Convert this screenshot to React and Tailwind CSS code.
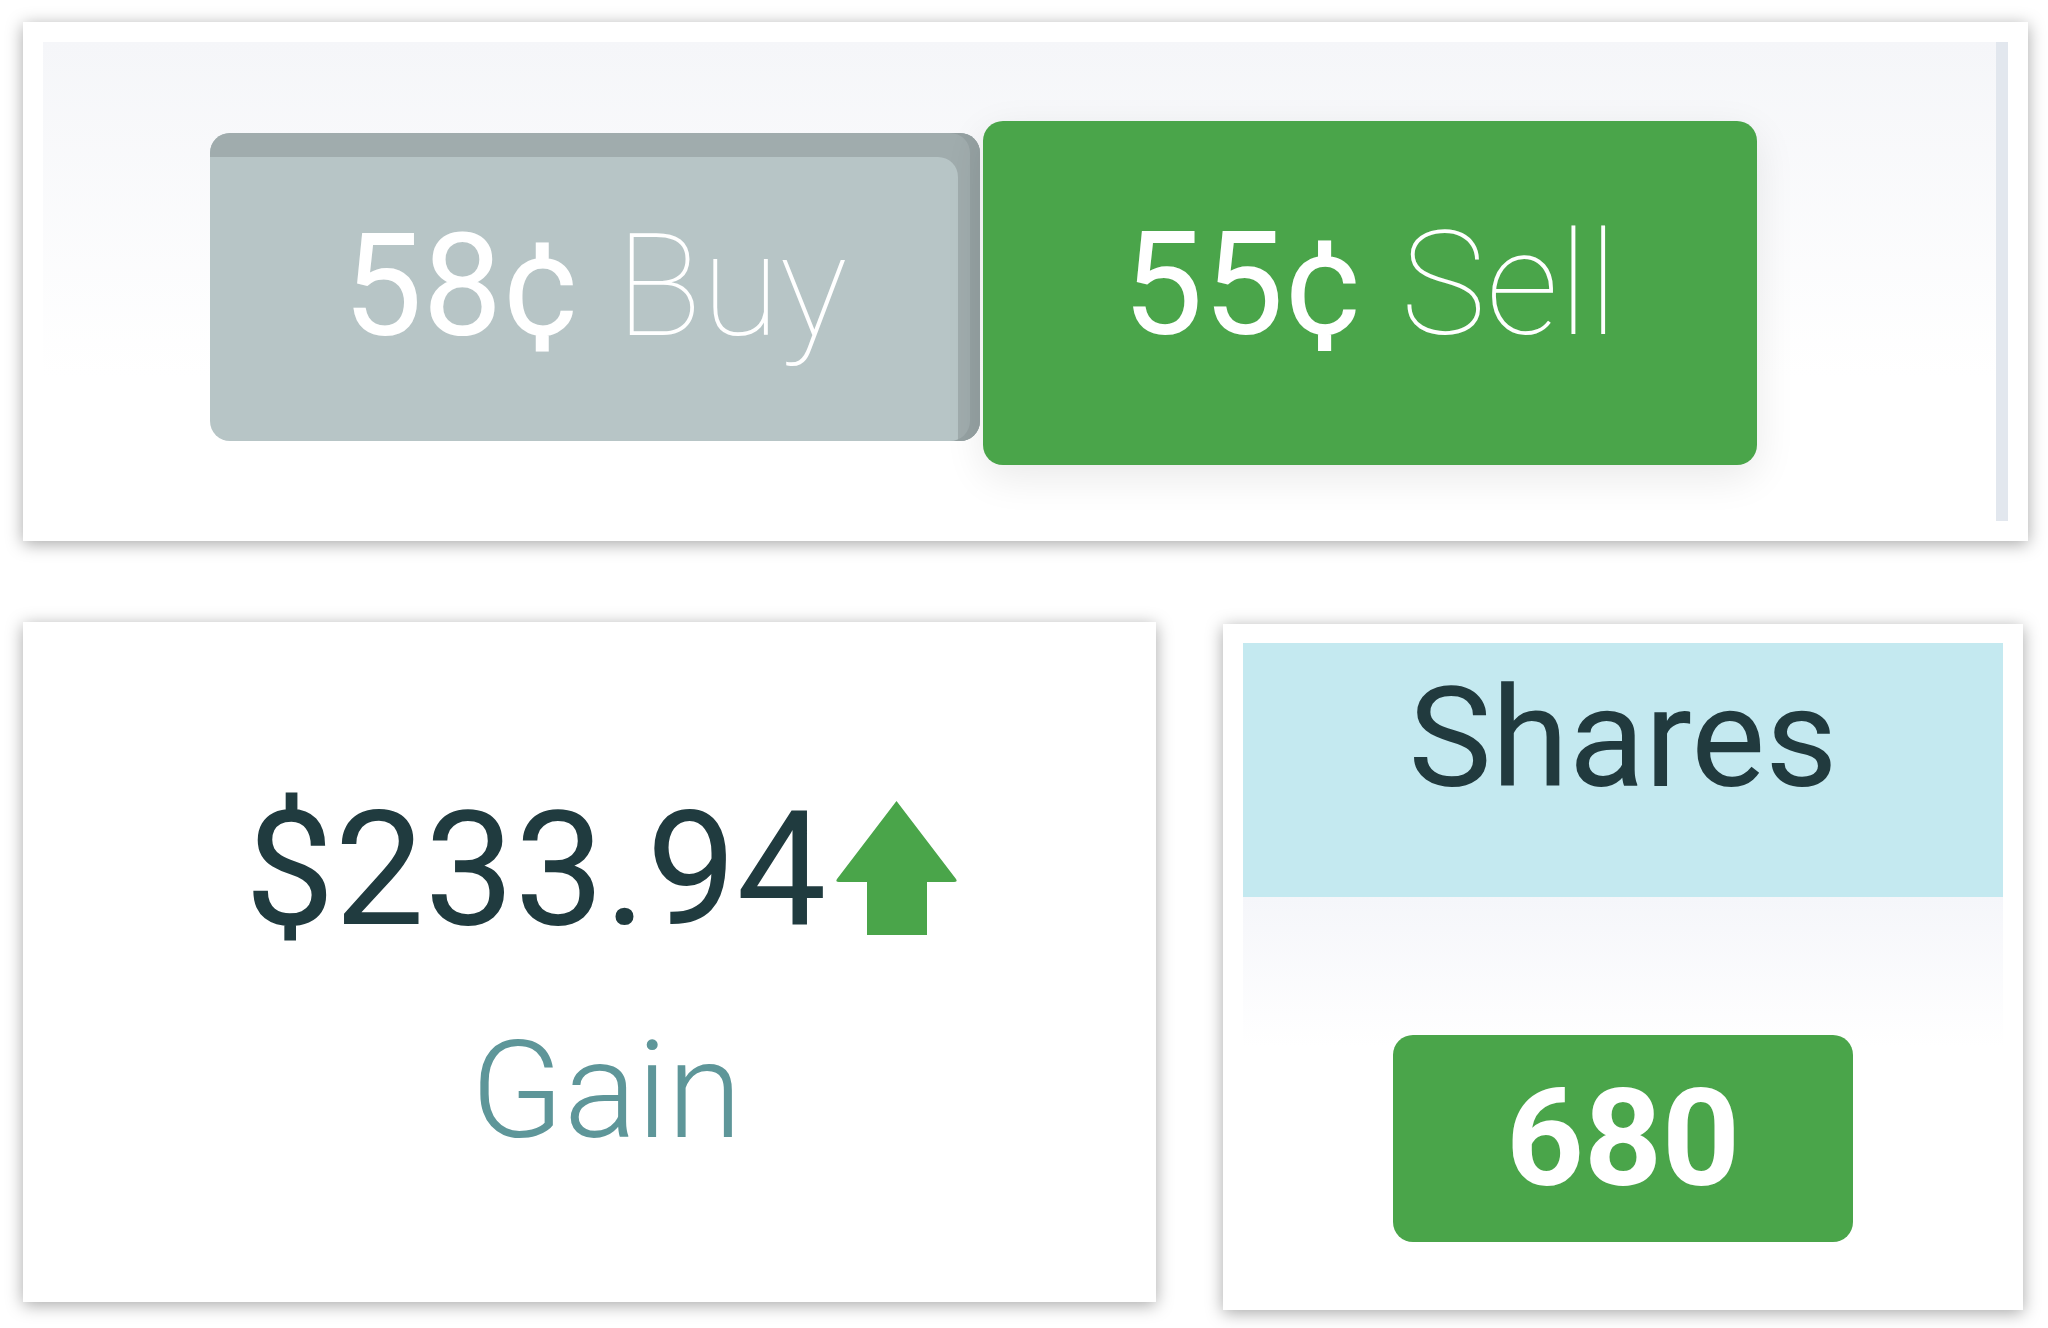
import React from 'react';

const font = { fontFamily: 'Roboto, "Open Sans", sans-serif' };

const UpArrow = () => (
  <svg width="123" height="136" viewBox="0 0 123 136" className="mt-[9px] ml-[9px] shrink-0">
    <path d="M61.5 2 L121 80 Q123 83 119 83 L92 83 L92 136 L32 136 L32 83 L4 83 Q0 83 2 80 Z" fill="#4aa54a" />
  </svg>
);

const TradeButtons = () => (
  <div className="bg-white w-[2005px] h-[519px] ml-[23px] mt-[22px] p-[20px] flex shadow-[0_3px_16px_rgba(0,0,0,0.35)]">
    <div className="flex-1 flex items-start pl-[167px] pt-[79px] bg-[linear-gradient(to_bottom,#f5f6f9,#ffffff_70%)]">
      <button className="mt-[12px] w-[770px] h-[308px] rounded-[20px] bg-[#b7c5c6] shadow-[inset_-10px_0_0_#95a1a2,inset_-22px_24px_0_#a0acad] flex items-center justify-center text-white text-[142px] leading-none">
        <span className="font-normal">58¢</span>
        <span className="font-thin ml-[36px]">Buy</span>
      </button>
      <button className="ml-[3px] w-[774px] h-[344px] rounded-[20px] bg-[#4aa54a] shadow-[0_12px_40px_rgba(0,0,0,0.09)] flex items-center justify-center pb-[16px] text-white text-[144px] leading-none">
        <span className="font-normal">55¢</span>
        <span className="font-thin ml-[38px]">Sell</span>
      </button>
    </div>
    <div className="w-[12px] bg-[#e2e7ee]" />
  </div>
);

const GainCard = () => (
  <div className="bg-white w-[1133px] h-[680px] shadow-[0_3px_16px_rgba(0,0,0,0.35)] flex flex-col items-center pt-[168px] pl-[24px]">
    <div className="flex items-start">
      <span className="text-[160px] leading-none text-[#203b3f] font-normal">$233.94</span>
      <UpArrow />
    </div>
    <div className="mt-[73px] pl-[10px] text-[136px] leading-none font-light text-[#5e9699]">Gain</div>
  </div>
);

const SharesCard = () => (
  <div className="bg-white w-[800px] h-[686px] mt-[2px] shadow-[0_3px_16px_rgba(0,0,0,0.35)] pt-[19px] px-[20px]">
    <div className="h-[254px] bg-[#c4e9f0] pt-[25px] text-center text-[140px] leading-none text-[#213a3e]">
      Shares
    </div>
    <div className="h-[150px] bg-[linear-gradient(to_bottom,#f5f6fa,#ffffff)]" />
    <div className="-mt-[12px] flex justify-center">
      <div className="w-[460px] h-[207px] rounded-[20px] bg-[#4aa54a] flex items-center justify-center text-white font-bold text-[136px] leading-none">
        680
      </div>
    </div>
  </div>
);

export default function App() {
  return (
    <div className="w-[2048px] h-[1328px] bg-white overflow-hidden" style={font}>
      <TradeButtons />
      <div className="flex items-start gap-[67px] ml-[23px] mt-[81px]">
        <GainCard />
        <SharesCard />
      </div>
    </div>
  );
}
